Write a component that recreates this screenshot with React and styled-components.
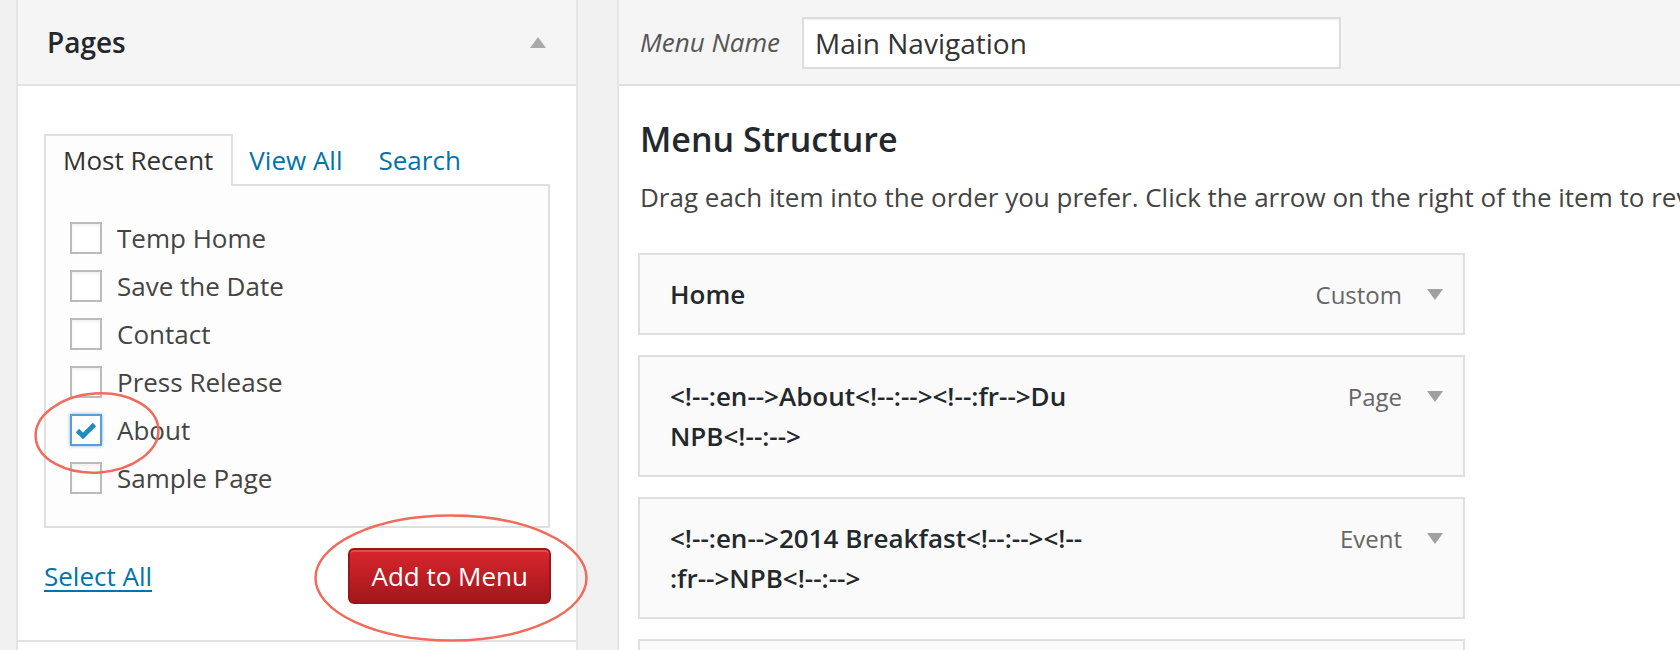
import React from 'react';
import styled, { createGlobalStyle } from 'styled-components';

const GlobalStyle = createGlobalStyle`
  html, body { margin: 0; padding: 0; background: #f1f1f1; }
  body { font-family: "Open Sans", "Noto Sans", sans-serif; -webkit-font-smoothing: antialiased; }
  * { box-sizing: border-box; }
`;

const Page = styled.div`
  position: relative;
  width: 1680px;
  height: 650px;
  overflow: hidden;
  display: flex;
  align-items: stretch;
  gap: 39px;
  padding-left: 16px;
  background: #f1f1f1;
`;

const SidePanel = styled.div`
  flex: none;
  width: 562px;
  background: #fff;
  border-left: 2px solid #e5e5e5;
  border-right: 2px solid #e5e5e5;
  display: flex;
  flex-direction: column;
`;

const Section = styled.section`
  border-bottom: 2px solid #e2e2e2;
`;

const SectionHeader = styled.div`
  height: 86px;
  padding: 0 30px 0 29px;
  display: flex;
  align-items: center;
  justify-content: space-between;
  background: #f5f5f5;
  border-bottom: 2px solid #e2e2e2;
`;

const SectionTitle = styled.h3`
  margin: 0;
  font-size: 28px;
  font-weight: 600;
  color: #23282d;
  line-height: 40px;
`;

const SectionBody = styled.div`
  padding: 48px 26px 36px 26px;
`;

const Tabs = styled.ul`
  list-style: none;
  margin: 0 0 -2px 0;
  padding: 0;
  display: flex;
  align-items: flex-end;
  position: relative;
  z-index: 1;
`;

const ActiveTab = styled.li`
  border: 2px solid #dfdfdf;
  border-bottom: none;
  background: #fdfdfd;
  padding: 6px 18px 8px 17px;
  font-size: 26px;
  line-height: 36px;
  color: #333;
`;

const TabLink = styled.li`
  padding: 6px 20px 8px 16px;
  font-size: 26px;
  line-height: 36px;
  color: #0073aa;
`;

const TabPanel = styled.ul`
  list-style: none;
  margin: 0;
  padding: 28px 24px 24px 24px;
  border: 2px solid #dfdfdf;
  background: #fdfdfd;
`;

const CheckRow = styled.li`
  display: flex;
  align-items: center;
  height: 48px;
  gap: 15px;
  font-size: 26px;
  color: #444;
`;

const CheckBox = styled.span`
  flex: none;
  width: 32px;
  height: 32px;
  display: flex;
  align-items: center;
  justify-content: center;
  background: #fff;
  border: 2px solid ${(p) => (p.$checked ? '#5b9dd9' : '#bbbbbb')};
  box-shadow: ${(p) =>
    p.$checked ? '0 0 3px rgba(30,140,190,.6)' : 'inset 0 2px 3px rgba(0,0,0,.06)'};
`;

const ButtonControls = styled.div`
  display: flex;
  align-items: center;
  justify-content: space-between;
  margin-top: 20px;
`;

const TextLink = styled.a`
  font-size: 26px;
  color: #0073aa;
  text-decoration: underline;
  text-underline-offset: 4px;
  text-decoration-thickness: 2px;
  cursor: pointer;
`;

const PrimaryButton = styled.button`
  height: 56px;
  padding: 0 21px;
  margin-right: -1px;
  font-family: inherit;
  font-size: 26px;
  line-height: 52px;
  color: #fff;
  border: 2px solid #9b161a;
  border-radius: 6px;
  background: linear-gradient(#d8262d, #a2171b);
  box-shadow: inset 0 2px 0 rgba(255, 255, 255, 0.18);
  cursor: pointer;
`;

const NextSection = styled.div`
  flex: 1;
  background: #fff;
`;

const MainPanel = styled.div`
  flex: 1;
  min-width: 0;
  background: #fff;
  border-left: 2px solid #e5e5e5;
  overflow: hidden;
`;

const MenuHeader = styled.div`
  height: 86px;
  padding: 0 21px;
  display: flex;
  align-items: center;
  gap: 22px;
  background: #f5f5f5;
  border-bottom: 2px solid #dfdfdf;
`;

const NameLabel = styled.label`
  font-size: 26px;
  font-style: italic;
  color: #555;
`;

const NameInput = styled.input`
  width: 539px;
  height: 52px;
  margin-top: 1px;
  padding: 0 11px;
  font-family: inherit;
  font-size: 28px;
  color: #333;
  background: #fff;
  border: 2px solid #ddd;
  box-shadow: inset 0 1px 2px rgba(0, 0, 0, 0.07);
  outline: none;
`;

const MenuBody = styled.div`
  padding: 33px 21px 0 21px;
`;

const MenuHeading = styled.h3`
  margin: 0;
  font-size: 34px;
  font-weight: 600;
  line-height: 40px;
  color: #23282d;
`;

const Instructions = styled.p`
  margin: 20px 0 0 0;
  font-size: 26px;
  line-height: 36px;
  color: #444;
  white-space: nowrap;
`;

const MenuList = styled.ul`
  list-style: none;
  margin: 38px 0 0 -2px;
  padding: 0;
  display: flex;
  flex-direction: column;
  gap: 20px;
`;

const MenuItem = styled.li`
  width: 827px;
  min-height: 82px;
  display: flex;
  align-items: flex-start;
  justify-content: space-between;
  padding: 19px 20px 19px 30px;
  background: #fafafa;
  border: 2px solid #dfdfdf;
`;

const ItemTitle = styled.div`
  font-size: 26px;
  font-weight: 600;
  line-height: 40px;
  color: #23282d;
  white-space: nowrap;
`;

const ItemControls = styled.div`
  display: flex;
  align-items: center;
  gap: 25px;
  height: 40px;
  font-size: 24px;
  color: #666;
`;

const Annotation = styled.svg`
  position: absolute;
  overflow: visible;
  pointer-events: none;
`;

const UpArrow = () => (
  <svg width="16" height="12" viewBox="0 0 16 12">
    <polygon points="0,12 8,1 16,12" fill="#aaaaaa" />
  </svg>
);

const DownArrow = () => (
  <svg width="16" height="11" viewBox="0 0 16 11">
    <polygon points="0,0 16,0 8,11" fill="#a0a0a0" />
  </svg>
);

const Check = () => (
  <svg width="22" height="17" viewBox="0 0 22 17">
    <polyline
      points="2.5,8.5 8,14 19.5,2.5"
      fill="none"
      stroke="#1e8cbe"
      strokeWidth="4.6"
      strokeLinejoin="miter"
    />
  </svg>
);

const pages = [
  { label: 'Temp Home' },
  { label: 'Save the Date' },
  { label: 'Contact' },
  { label: 'Press Release' },
  { label: 'About', checked: true },
  { label: 'Sample Page' },
];

const items = [
  { lines: ['Home'], type: 'Custom' },
  { lines: ['<!--:en-->About<!--:--><!--:fr-->Du', 'NPB<!--:-->'], type: 'Page' },
  { lines: ['<!--:en-->2014 Breakfast<!--:--><!--', ':fr-->NPB<!--:-->'], type: 'Event' },
  { lines: [], type: null },
];

export default function App() {
  return (
    <>
      <GlobalStyle />
      <Page>
        <SidePanel>
          <Section>
            <SectionHeader>
              <SectionTitle>Pages</SectionTitle>
              <UpArrow />
            </SectionHeader>
            <SectionBody>
              <Tabs>
                <ActiveTab>Most Recent</ActiveTab>
                <TabLink>View All</TabLink>
                <TabLink>Search</TabLink>
              </Tabs>
              <TabPanel>
                {pages.map((p) => (
                  <CheckRow key={p.label}>
                    <CheckBox $checked={p.checked}>{p.checked && <Check />}</CheckBox>
                    {p.label}
                  </CheckRow>
                ))}
              </TabPanel>
              <ButtonControls>
                <TextLink>Select All</TextLink>
                <PrimaryButton>Add to Menu</PrimaryButton>
              </ButtonControls>
            </SectionBody>
          </Section>
          <NextSection />
        </SidePanel>

        <MainPanel>
          <MenuHeader>
            <NameLabel>Menu Name</NameLabel>
            <NameInput defaultValue="Main Navigation" />
          </MenuHeader>
          <MenuBody>
            <MenuHeading>Menu Structure</MenuHeading>
            <Instructions>
              Drag each item into the order you prefer. Click the arrow on the right of the item to
              reveal additional configuration options.
            </Instructions>
            <MenuList>
              {items.map((it, i) => (
                <MenuItem key={i}>
                  <ItemTitle>
                    {it.lines.map((l, j) => (
                      <div key={j}>{l}</div>
                    ))}
                  </ItemTitle>
                  {it.type && (
                    <ItemControls>
                      <span>{it.type}</span>
                      <DownArrow />
                    </ItemControls>
                  )}
                </MenuItem>
              ))}
            </MenuList>
          </MenuBody>
        </MainPanel>

        <Annotation style={{ left: 34, top: 392 }} width="126" height="82" viewBox="0 0 126 82">
          <ellipse cx="63" cy="41" rx="61.5" ry="39.5" fill="none" stroke="#f06b5b" strokeWidth="2.5" transform="rotate(-4 63 41)" />
        </Annotation>
        <Annotation style={{ left: 314, top: 514 }} width="274" height="128" viewBox="0 0 274 128">
          <ellipse cx="137" cy="64" rx="135.5" ry="62.5" fill="none" stroke="#f06b5b" strokeWidth="2.5" />
        </Annotation>
      </Page>
    </>
  );
}
